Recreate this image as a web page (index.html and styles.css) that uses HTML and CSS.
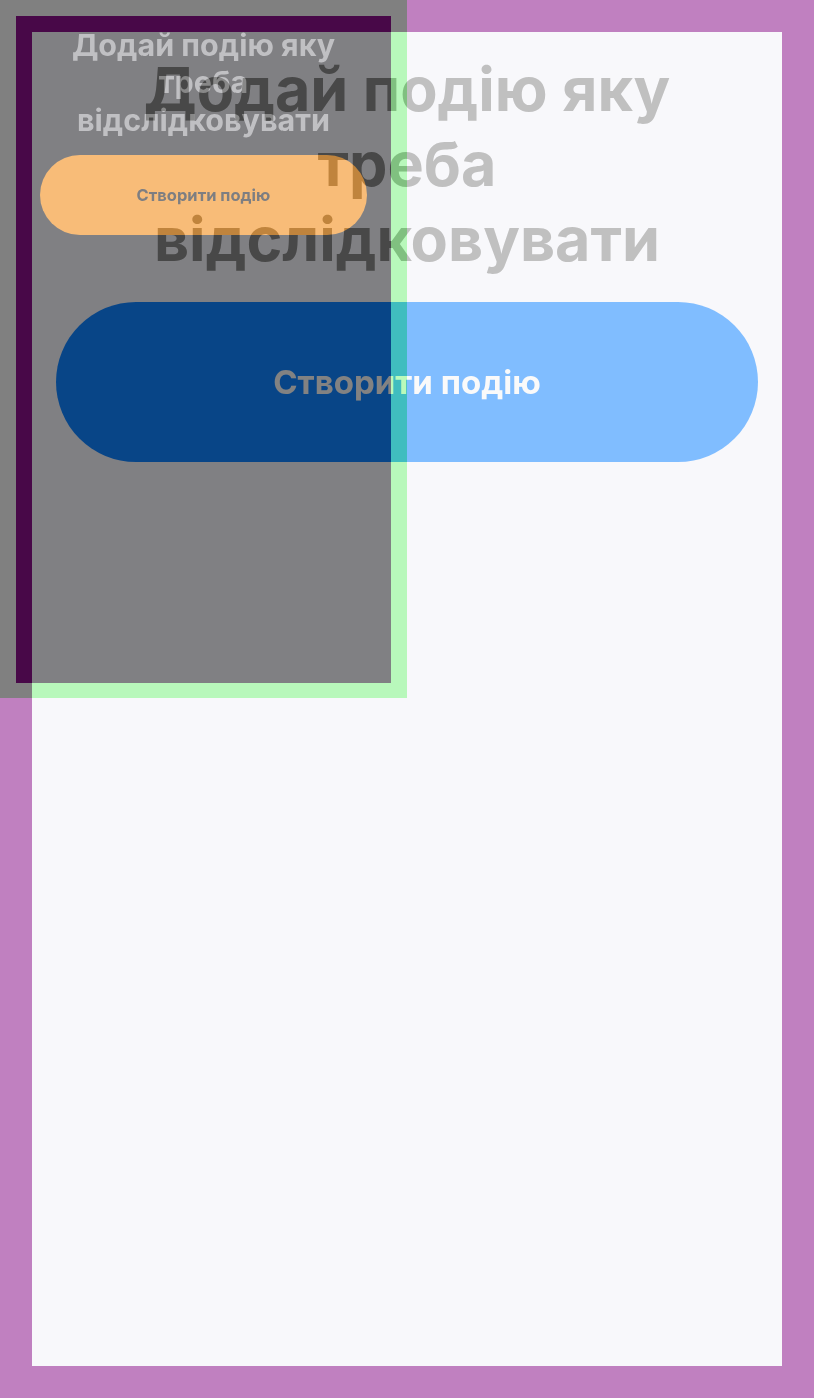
FILE: index.html
```html
<!DOCTYPE html>
<html lang="uk">
<head>
<meta charset="utf-8">
<title>Створити подію</title>
<link rel="stylesheet" href="styles.css">
</head>
<body>
<div class="stage">
  <div class="page">
    <main class="card">
      <h1 class="title">Додай подію яку треба відслідковувати</h1>
      <button class="cta" type="button">Створити подію</button>
    </main>
  </div>
  <div class="mini" aria-hidden="true">
    <div class="mini-card">
      <div class="mini-title">Додай подію яку треба відслідковувати</div>
      <div class="mini-cta">Створити подію</div>
    </div>
  </div>
</div>
</body>
</html>
```

FILE: styles.css
```css
html, body {
  margin: 0;
  padding: 0;
}
body {
  font-family: Inter, "Noto Sans", "Liberation Sans", sans-serif;
  background: #c080c0;
}
.stage {
  position: relative;
  width: 814px;
  height: 1398px;
  isolation: isolate;
}
.page {
  box-sizing: border-box;
  height: 100%;
  padding: 32px;
  background: #c080c0;
}
.card {
  box-sizing: border-box;
  height: 100%;
  padding: 19.5px 24px;
  background: #f8f8fb;
  display: flex;
  flex-direction: column;
  align-items: center;
}
.title {
  margin: 0 0 25.5px;
  max-width: 600px;
  font-size: 61px;
  line-height: 75px;
  font-weight: 700;
  color: #c0c0c0;
  text-align: center;
}
.cta {
  width: 100%;
  height: 160px;
  border: 0;
  border-radius: 80px;
  background: #80bdff;
  color: #fafafa;
  font-family: inherit;
  font-size: 33px;
  font-weight: 700;
}
.mini {
  position: absolute;
  top: 0;
  left: 0;
  box-sizing: border-box;
  width: 407px;
  height: 698px;
  padding: 16px 16px 15px;
  background: #400040;
  mix-blend-mode: difference;
}
.mini-card {
  box-sizing: border-box;
  height: 100%;
  padding: 9.5px 24px;
  background: #787878;
  display: flex;
  flex-direction: column;
  align-items: center;
}
.mini-title {
  margin: 0 0 17px;
  font-size: 30.5px;
  line-height: 37.5px;
  font-weight: 700;
  color: #383838;
  text-align: center;
}
.mini-cta {
  align-self: stretch;
  height: 80px;
  border-radius: 40px;
  background: #003c83;
  color: #7a7a7a;
  font-size: 16.5px;
  font-weight: 700;
  display: flex;
  align-items: center;
  justify-content: center;
}
```
